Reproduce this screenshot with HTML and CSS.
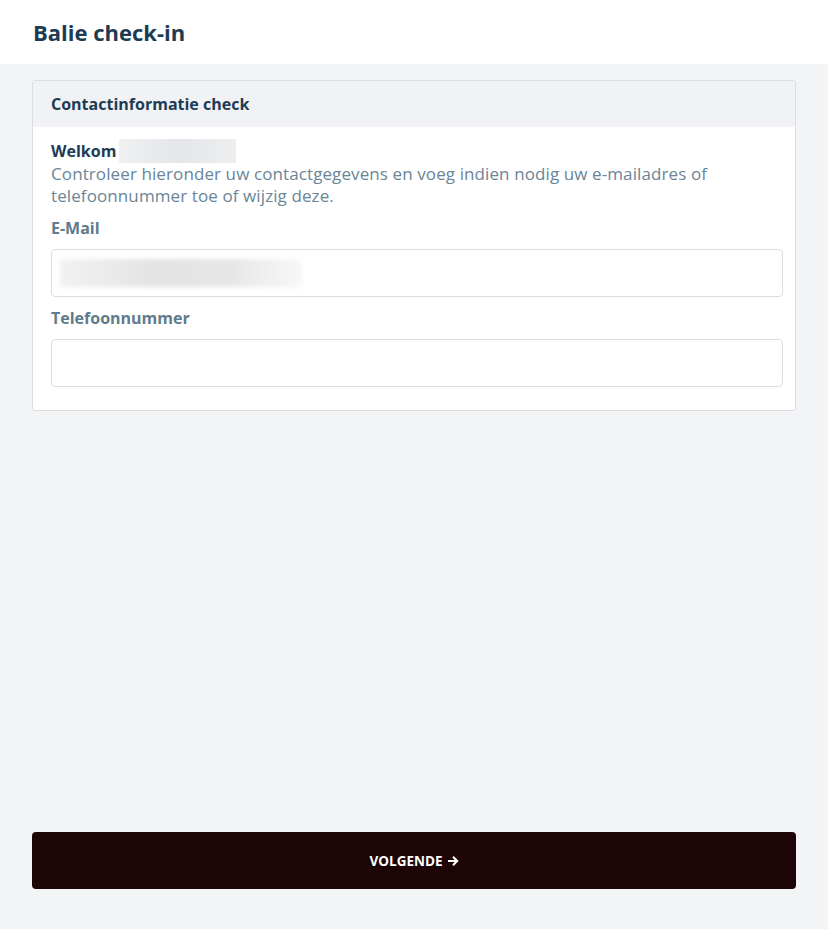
FILE: index.html
```html
<!DOCTYPE html>
<html lang="nl">
<head>
<meta charset="utf-8">
<title>Balie check-in</title>
<link rel="stylesheet" href="styles.css">
</head>
<body>
<div class="page">
  <header class="topbar">
    <h1 class="title">Balie check-in</h1>
  </header>
  <main class="content">
    <section class="card">
      <div class="card-head">Contactinformatie check</div>
      <div class="card-body">
        <div class="welcome"><span class="welcome-word">Welkom</span><span class="blur-name"></span></div>
        <p class="intro">Controleer hieronder uw contactgegevens en voeg indien nodig uw e-mailadres of telefoonnummer toe of wijzig deze.</p>
        <label class="label">E-Mail</label>
        <div class="input"><span class="blur-email"></span></div>
        <label class="label">Telefoonnummer</label>
        <div class="input"></div>
      </div>
    </section>
    <button class="next">VOLGENDE <svg class="arrow" width="12" height="12" viewBox="0 0 12 12"><path d="M1 6h9M6 1.8l4.2 4.2L6 10.2" fill="none" stroke="#fff" stroke-width="2"/></svg></button>
  </main>
</div>
</body>
</html>
```
FILE: styles.css
```css
html, body {
  margin: 0;
  padding: 0;
}
body {
  background: #f3f4f6;
  font-family: "Open Sans", "Lato", sans-serif;
}
.page {
  min-height: 100vh;
  display: flex;
  flex-direction: column;
}
.topbar {
  background: #fff;
  height: 64px;
  display: flex;
  align-items: center;
  padding: 0 33px;
}
.title {
  margin: 0;
  font-size: 22px;
  font-weight: 700;
  color: #1d3b53;
}
.content {
  flex: 1;
  display: flex;
  flex-direction: column;
  padding: 16px 32px 40px;
}
.card {
  background: #fff;
  border: 1px solid #dcdde1;
  border-radius: 3px;
}
.card-head {
  background: #f1f2f6;
  height: 46px;
  display: flex;
  align-items: center;
  padding: 0 18px;
  font-size: 16px;
  font-weight: 700;
  color: #1d3b53;
}
.card-body {
  padding: 12px 12px 23px 18px;
  display: flex;
  flex-direction: column;
}
.welcome {
  display: flex;
  align-items: center;
  height: 24px;
  font-size: 16px;
  font-weight: 700;
  color: #1d3b53;
}
.blur-name {
  display: inline-block;
  width: 117px;
  height: 24px;
  margin-left: 3px;
  background: linear-gradient(90deg, #eef0f2, #e4e6e9 50%, #eceef0);
}
.intro {
  margin: 0;
  font-size: 17px;
  letter-spacing: 0.1px;
  line-height: 22px;
  color: #6a8597;
}
.label {
  margin-top: 10px;
  font-size: 16px;
  font-weight: 700;
  line-height: 22px;
  color: #607b8c;
}
.input {
  margin-top: 10px;
  height: 46px;
  border: 1px solid #dcdde1;
  border-radius: 4px;
  display: flex;
  align-items: center;
  padding: 0 8px;
}
.blur-email {
  display: block;
  width: 242px;
  height: 28px;
  background: linear-gradient(90deg, #f2f2f2, #e3e3e3 40%, #e6e6e6 70%, #f8f8f8);
  filter: blur(2px);
}
.next {
  margin-top: auto;
  height: 57px;
  border: none;
  border-radius: 4px;
  background: #1d0505;
  color: #fff;
  font-family: "Open Sans", sans-serif;
  font-weight: 700;
  font-size: 13.5px;
  display: flex;
  align-items: center;
  justify-content: center;
  gap: 4px;
}
.arrow {
  display: block;
}
```
